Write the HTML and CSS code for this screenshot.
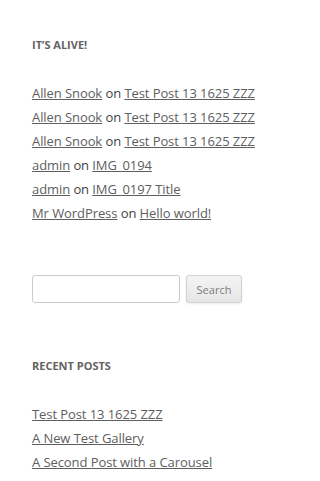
FILE: index.html
```html
<!DOCTYPE html>
<html lang="en">
<head>
<meta charset="utf-8">
<title>Sidebar</title>
<link rel="stylesheet" href="styles.css">
</head>
<body>
<div class="sidebar">
  <section class="widget">
    <h3 class="widget-title">It&rsquo;s alive!</h3>
    <ul class="list">
      <li><a href="#">Allen Snook</a> on <a href="#">Test Post 13 1625 ZZZ</a></li>
      <li><a href="#">Allen Snook</a> on <a href="#">Test Post 13 1625 ZZZ</a></li>
      <li><a href="#">Allen Snook</a> on <a href="#">Test Post 13 1625 ZZZ</a></li>
      <li><a href="#">admin</a> on <a href="#">IMG_0194</a></li>
      <li><a href="#">admin</a> on <a href="#">IMG_0197 Title</a></li>
      <li><a href="#">Mr WordPress</a> on <a href="#">Hello world!</a></li>
    </ul>
  </section>
  <section class="widget search-widget">
    <form class="search-form">
      <input class="search-input" type="text" aria-label="Search for">
      <button class="search-button" type="button">Search</button>
    </form>
  </section>
  <section class="widget">
    <h3 class="widget-title">Recent Posts</h3>
    <ul class="list">
      <li><a href="#">Test Post 13 1625 ZZZ</a></li>
      <li><a href="#">A New Test Gallery</a></li>
      <li><a href="#">A Second Post with a Carousel</a></li>
    </ul>
  </section>
</div>
</body>
</html>
```

FILE: styles.css
```css
html, body {
  margin: 0;
  padding: 0;
  background: #fff;
}
body {
  font-family: "Open Sans", "Liberation Sans", sans-serif;
  color: #444;
}
.sidebar {
  display: flex;
  flex-direction: column;
  padding: 35px 20px 0 32px;
}
.widget {
  margin: 0;
}
.widget-title {
  margin: 0 0 26px;
  font-size: 11px;
  line-height: 20px;
  font-weight: 700;
  text-transform: uppercase;
  color: #636363;
}
.list {
  list-style: none;
  margin: 0 0 50px;
  padding: 0;
}
.widget:last-child .list {
  margin-bottom: 0;
}
.list li {
  font-size: 13px;
  line-height: 24px;
  letter-spacing: -0.08px;
  white-space: nowrap;
}
.list a {
  color: #5e5e5e;
  text-decoration: underline;
}
.search-widget {
  margin-bottom: 53px;
}
.search-form {
  display: flex;
  gap: 6px;
  margin: 0;
}
.search-input {
  box-sizing: border-box;
  width: 148px;
  height: 28px;
  margin: 0;
  padding: 6px;
  border: 1px solid #ccc;
  border-radius: 3px;
  background: #fff;
  font-family: inherit;
  font-size: 13px;
}
.search-button {
  box-sizing: border-box;
  width: 56px;
  height: 28px;
  margin: 0;
  padding: 0 8px;
  font-family: inherit;
  font-size: 11px;
  color: #7c7c7c;
  background-color: #e6e6e6;
  background-image: linear-gradient(to bottom, #f4f4f4, #e6e6e6);
  border: 1px solid #d2d2d2;
  border-radius: 3px;
  box-shadow: 0 1px 2px rgba(64, 64, 64, 0.1);
}
```
